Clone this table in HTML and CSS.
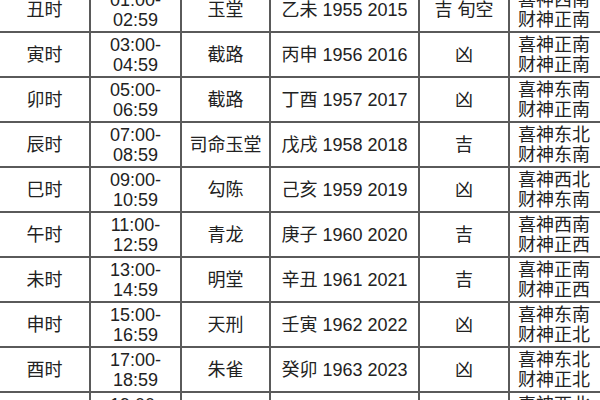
FILE: index.html
```html
<!DOCTYPE html>
<html lang="zh">
<head>
<meta charset="utf-8">
<title>时辰吉凶表</title>
<link rel="stylesheet" href="styles.css">
</head>
<body>
<div class="sheet">
  <div class="cell">丑时</div><div class="cell">01:00-<br>02:59</div><div class="cell">玉堂</div><div class="cell">乙未 1955 2015</div><div class="cell">吉 旬空</div><div class="cell last">喜神西南<br>财神正南</div>
  <div class="cell">寅时</div><div class="cell">03:00-<br>04:59</div><div class="cell">截路</div><div class="cell">丙申 1956 2016</div><div class="cell">凶</div><div class="cell last">喜神正南<br>财神正南</div>
  <div class="cell">卯时</div><div class="cell">05:00-<br>06:59</div><div class="cell">截路</div><div class="cell">丁酉 1957 2017</div><div class="cell">凶</div><div class="cell last">喜神东南<br>财神正南</div>
  <div class="cell">辰时</div><div class="cell">07:00-<br>08:59</div><div class="cell">司命玉堂</div><div class="cell">戊戌 1958 2018</div><div class="cell">吉</div><div class="cell last">喜神东北<br>财神东南</div>
  <div class="cell">巳时</div><div class="cell">09:00-<br>10:59</div><div class="cell">勾陈</div><div class="cell">己亥 1959 2019</div><div class="cell">凶</div><div class="cell last">喜神西北<br>财神东南</div>
  <div class="cell">午时</div><div class="cell">11:00-<br>12:59</div><div class="cell">青龙</div><div class="cell">庚子 1960 2020</div><div class="cell">吉</div><div class="cell last">喜神西南<br>财神正西</div>
  <div class="cell">未时</div><div class="cell">13:00-<br>14:59</div><div class="cell">明堂</div><div class="cell">辛丑 1961 2021</div><div class="cell">吉</div><div class="cell last">喜神正南<br>财神正西</div>
  <div class="cell">申时</div><div class="cell">15:00-<br>16:59</div><div class="cell">天刑</div><div class="cell">壬寅 1962 2022</div><div class="cell">凶</div><div class="cell last">喜神东南<br>财神正北</div>
  <div class="cell">酉时</div><div class="cell">17:00-<br>18:59</div><div class="cell">朱雀</div><div class="cell">癸卯 1963 2023</div><div class="cell">凶</div><div class="cell last">喜神东北<br>财神正北</div>
  <div class="cell">戌时</div><div class="cell">19:00-<br>20:59</div><div class="cell">金匮</div><div class="cell">甲辰 1964 2024</div><div class="cell">吉</div><div class="cell last">喜神西北<br>财神正东</div>
</div>
</body>
</html>
```
FILE: styles.css
```css
html, body {
  margin: 0;
  padding: 0;
  background: #ffffff;
  overflow: hidden;
  width: 600px;
  height: 400px;
}

.sheet {
  display: grid;
  grid-template-columns: 89px 89px 87px 147px 88px 92px;
  grid-auto-rows: 43px;
  gap: 2px;
  padding: 2px;
  margin: -14px 0 0 -2px;
  width: max-content;
  background: #5a5a5a;
  font-family: "Liberation Sans", "Noto Sans CJK SC", sans-serif;
  font-size: 18px;
  line-height: 20px;
  color: #222222;
}

.cell {
  background: #ffffff;
  display: flex;
  align-items: center;
  justify-content: center;
  text-align: center;
  white-space: nowrap;
}

.last {
  padding-right: 4px;
}
```
